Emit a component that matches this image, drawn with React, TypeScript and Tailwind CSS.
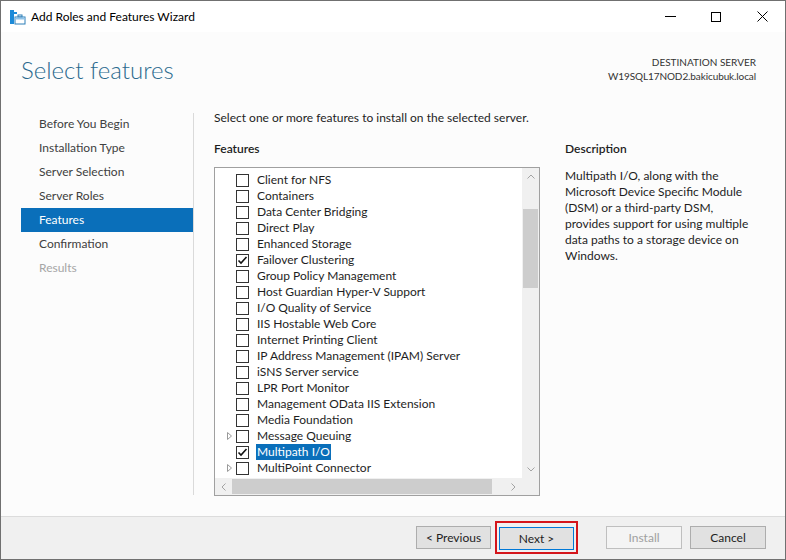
import React from "react";

const features: { name: string; checked?: boolean; expand?: boolean; selected?: boolean }[] = [
  { name: "Client for NFS" },
  { name: "Containers" },
  { name: "Data Center Bridging" },
  { name: "Direct Play" },
  { name: "Enhanced Storage" },
  { name: "Failover Clustering", checked: true },
  { name: "Group Policy Management" },
  { name: "Host Guardian Hyper-V Support" },
  { name: "I/O Quality of Service" },
  { name: "IIS Hostable Web Core" },
  { name: "Internet Printing Client" },
  { name: "IP Address Management (IPAM) Server" },
  { name: "iSNS Server service" },
  { name: "LPR Port Monitor" },
  { name: "Management OData IIS Extension" },
  { name: "Media Foundation" },
  { name: "Message Queuing", expand: true },
  { name: "Multipath I/O", checked: true, selected: true },
  { name: "MultiPoint Connector", expand: true },
];

const steps = [
  "Before You Begin",
  "Installation Type",
  "Server Selection",
  "Server Roles",
  "Features",
  "Confirmation",
  "Results",
];

function AppIcon() {
  return (
    <svg width="17" height="16" viewBox="0 0 17 16">
      <rect x="1" y="1" width="4" height="14" fill="#1c8ad8" />
      <rect x="5" y="3" width="3" height="2" fill="#1c8ad8" />
      <rect x="6" y="8" width="10" height="7" fill="#fff" stroke="#2d7fb8" />
      <rect x="9" y="6" width="4" height="2" fill="none" stroke="#2d7fb8" />
      <rect x="6.5" y="8.5" width="9" height="2" fill="#8fc3ea" />
    </svg>
  );
}

function CheckBox({ checked }: { checked?: boolean }) {
  return (
    <div className="w-[13px] h-[13px] border border-[#333] bg-white flex items-center justify-center">
      {checked && (
        <svg width="11" height="11" viewBox="0 0 11 11">
          <path d="M1.5 5.5 L4 8 L9.5 2" fill="none" stroke="#111" strokeWidth="1.6" />
        </svg>
      )}
    </div>
  );
}

export default function App() {
  return (
    <div
      className="w-[786px] h-[560px] flex flex-col border border-[#707070] bg-white text-[#1e1e1e] overflow-hidden"
      style={{ fontFamily: '"Segoe UI", Lato, "Noto Sans", sans-serif' }}
    >
      {/* title bar */}
      <div className="h-[31px] flex items-center bg-white shrink-0">
        <div className="ml-[8px] mr-[5px] flex items-center">
          <AppIcon />
        </div>
        <div className="text-[12px] text-black">Add Roles and Features Wizard</div>
        <div className="ml-auto flex h-full">
          <div className="w-[46px] flex items-center justify-center">
            <div className="w-[11px] h-px bg-black" />
          </div>
          <div className="w-[46px] flex items-center justify-center">
            <div className="w-[10px] h-[10px] border border-black" />
          </div>
          <div className="w-[46px] flex items-center justify-center">
            <svg width="11" height="11" viewBox="0 0 11 11">
              <path d="M0.5 0.5 L10.5 10.5 M10.5 0.5 L0.5 10.5" stroke="#000" strokeWidth="1" />
            </svg>
          </div>
        </div>
      </div>

      {/* body */}
      <div className="flex-1 flex flex-col bg-[#fcfcfc]">
        <div className="flex items-start pt-[23px] pl-[20px] pr-[29px] h-[77px]">
          <div className="text-[24px] leading-[30px] font-light text-[#2b6a8e]">Select features</div>
          <div className="ml-auto text-right pt-[1px]">
            <div className="text-[10px] leading-[13px] text-[#333]">DESTINATION SERVER</div>
            <div className="text-[10px] leading-[14px] tracking-[-0.1px] text-[#333]">W19SQL17NOD2.bakicubuk.local</div>
          </div>
        </div>

        <div className="flex flex-1">
          {/* nav */}
          <div className="w-[172px] ml-[20px] pt-[3px]">
            {steps.map((s, i) => (
              <div
                key={s}
                className={
                  "h-[24px] flex items-center pl-[18px] text-[12px] " +
                  (i === 4
                    ? "bg-[#0a6fba] text-white"
                    : i === 6
                    ? "text-[#a6a6a6]"
                    : "text-[#404040]")
                }
              >
                {s}
              </div>
            ))}
          </div>
          <div className="w-px bg-[#dadada] mt-[4px] mb-[21px]" />

          {/* content */}
          <div className="pl-[20px] pt-[1px]">
            <div className="h-4 text-[12px] leading-4">
              Select one or more features to install on the selected server.
            </div>
            <div className="flex mt-[15px]">
              <div className="w-[326px]">
                <div className="h-4 text-[12px] leading-4 font-semibold">Features</div>
                <div className="mt-[10px] h-[329px] border border-[#a0a0a0] bg-white flex flex-col">
                  <div className="flex flex-1 min-h-0">
                    <div className="flex-1 overflow-hidden pt-[4px]">
                      {features.map((f) => (
                        <div key={f.name} className="h-4 flex items-center text-[12px]">
                          <div className="w-[21px] flex justify-end pr-[4px]">
                            {f.expand && (
                              <svg width="5" height="8" viewBox="0 0 5 8">
                                <path d="M0.5 0.5 L4.5 4 L0.5 7.5 Z" fill="none" stroke="#9a9a9a" />
                              </svg>
                            )}
                          </div>
                          <CheckBox checked={f.checked} />
                          <div
                            className={
                              "ml-[7px] px-px whitespace-nowrap leading-4 " +
                              (f.selected ? "bg-[#0a6fba] text-white" : "")
                            }
                          >
                            {f.name}
                          </div>
                        </div>
                      ))}
                    </div>
                    {/* vertical scrollbar */}
                    <div className="w-[17px] bg-[#f0f0f0] flex flex-col">
                      <div className="h-[17px] flex items-center justify-center">
                        <svg width="8" height="5" viewBox="0 0 8 5">
                          <path d="M0.5 4.5 L4 1 L7.5 4.5" fill="none" stroke="#a3a3a3" />
                        </svg>
                      </div>
                      <div className="h-[24px]" />
                      <div className="h-[79px] mx-px bg-[#cdcdcd]" />
                      <div className="flex-1" />
                      <div className="h-[17px] flex items-center justify-center">
                        <svg width="8" height="5" viewBox="0 0 8 5">
                          <path d="M0.5 0.5 L4 4 L7.5 0.5" fill="none" stroke="#a3a3a3" />
                        </svg>
                      </div>
                    </div>
                  </div>
                  {/* horizontal scrollbar */}
                  <div className="h-[17px] flex bg-[#f0f0f0]">
                    <div className="w-[17px] flex items-center justify-center">
                      <svg width="5" height="8" viewBox="0 0 5 8">
                        <path d="M4.5 0.5 L1 4 L4.5 7.5" fill="none" stroke="#a3a3a3" />
                      </svg>
                    </div>
                    <div className="w-[260px] my-px bg-[#cdcdcd]" />
                    <div className="flex-1" />
                    <div className="w-[17px] flex items-center justify-center">
                      <svg width="5" height="8" viewBox="0 0 5 8">
                        <path d="M0.5 0.5 L4 4 L0.5 7.5" fill="none" stroke="#a3a3a3" />
                      </svg>
                    </div>
                    <div className="w-[17px] bg-[#f0f0f0]" />
                  </div>
                </div>
              </div>
              <div className="ml-[25px] w-[195px]">
                <div className="h-4 text-[12px] leading-4 font-semibold">Description</div>
                <div className="mt-[11px] text-[12px] leading-4">
                  Multipath I/O, along with the Microsoft Device Specific Module (DSM) or a
                  third-party DSM, provides support for using multiple data paths to a storage
                  device on Windows.
                </div>
              </div>
            </div>
          </div>
        </div>
      </div>

      {/* footer */}
      <div className="h-[43px] shrink-0 border-t border-[#dcdcdc] bg-[#f0f0f0] flex items-center pl-[415px] pb-[1px]">
        <button className="w-[75px] h-[23px] border border-[#adadad] bg-[#e1e1e1] text-[12px] text-[#1e1e1e]">
          &lt; Previous
        </button>
        <div className="ml-[4px] p-[2px] border-2 border-[#d4151b]">
          <button className="w-[75px] h-[23px] border border-[#0078d7] bg-[#e1e1e1] text-[12px] text-[#1e1e1e]">
            Next &gt;
          </button>
        </div>
        <button className="ml-[28px] w-[76px] h-[23px] border border-[#bfbfbf] bg-[#f4f4f4] text-[12px] text-[#a0a0a0]">
          Install
        </button>
        <button className="ml-[8px] w-[76px] h-[23px] border border-[#adadad] bg-[#e1e1e1] text-[12px] text-[#1e1e1e]">
          Cancel
        </button>
      </div>
    </div>
  );
}
